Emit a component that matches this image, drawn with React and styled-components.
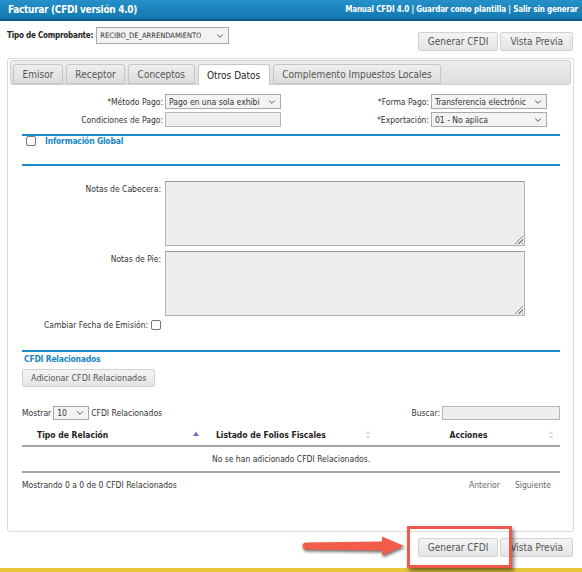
import React from "react";
import styled, {createGlobalStyle} from "styled-components";

const GlobalStyle = createGlobalStyle`
  * { box-sizing: border-box; }
  body {
    margin: 0;
    background: #fff;
    font-family: "DejaVu Sans Condensed", "Liberation Sans", sans-serif;
    color: #333;
  }
`;

const tabs = ["Emisor", "Receptor", "Conceptos", "Otros Datos", "Complemento Impuestos Locales"];

const App = () => {
    return (
        <Page>
            <GlobalStyle/>
            <Header>
                <Title>Facturar (CFDI versión 4.0)</Title>
                <Links>Manual CFDI 4.0 | Guardar como plantilla | Salir sin generar</Links>
            </Header>

            <TopRow>
                <TipoLabel>Tipo de Comprobante:</TipoLabel>
                <Select width={133} height={17} size={7.5}>
                    <span>RECIBO_DE_ARRENDAMIENTO</span>
                    <Chevron/>
                </Select>
                <Actions top={5}>
                    <Button>Generar CFDI</Button>
                    <Button>Vista Previa</Button>
                </Actions>
            </TopRow>

            <Panel>
                <TabBar>
                    {tabs.map((t) => (
                        <Tab key={t} active={t === "Otros Datos"}>{t}</Tab>
                    ))}
                </TabBar>

                <Content>
                    <FormGrid>
                        <Label>*Método Pago:</Label>
                        <Select width={116} height={15}>
                            <span>Pago en una sola exhibi</span>
                            <Chevron/>
                        </Select>
                        <Label>*Forma Pago:</Label>
                        <Select width={116} height={15}>
                            <span>Transferencia electrónic</span>
                            <Chevron/>
                        </Select>

                        <Label>Condiciones de Pago:</Label>
                        <Input/>
                        <Label>*Exportación:</Label>
                        <Select width={116} height={15}>
                            <span>01 - No aplica</span>
                            <Chevron/>
                        </Select>
                    </FormGrid>

                    <Rule top={7}/>
                    <CheckRow>
                        <Check/>
                        <SectionTitle>Información Global</SectionTitle>
                    </CheckRow>
                    <Rule top={18}/>

                    <NotesGrid>
                        <Label>Notas de Cabecera:</Label>
                        <Textarea/>
                        <Label>Notas de Pie:</Label>
                        <Textarea/>
                    </NotesGrid>

                    <FechaRow>
                        <Label>Cambiar Fecha de Emisión:</Label>
                        <Check/>
                    </FechaRow>

                    <Rule top={20}/>
                    <RelTitle>CFDI Relacionados</RelTitle>
                    <AddButton>Adicionar CFDI Relacionados</AddButton>

                    <TableTools>
                        <ToolGroup>
                            <Small>Mostrar</Small>
                            <Select width={36} height={14}>
                                <span>10</span>
                                <Chevron/>
                            </Select>
                            <Small>CFDI Relacionados</Small>
                        </ToolGroup>
                        <ToolGroup>
                            <Small>Buscar:</Small>
                            <SearchInput/>
                        </ToolGroup>
                    </TableTools>

                    <Table>
                        <HeadRow>
                            <Th pad={15}>Tipo de Relación<Sort dir="up"/></Th>
                            <Th pad={11}>Listado de Folios Fiscales<Sort/></Th>
                            <Th center>Acciones<Sort/></Th>
                        </HeadRow>
                        <EmptyRow>No se han adicionado CFDI Relacionados.</EmptyRow>
                    </Table>

                    <TableFooter>
                        <Small>Mostrando 0 a 0 de 0 CFDI Relacionados</Small>
                        <Pager>
                            <span>Anterior</span>
                            <span>Siguiente</span>
                        </Pager>
                    </TableFooter>
                </Content>
            </Panel>

            <BottomActions>
                <Button>Generar CFDI</Button>
                <Button>Vista Previa</Button>
                <Arrow viewBox="0 0 104 20" width="104" height="20">
                    <path d="M4 6.5 L80 5.5 L80 0.5 L102 10 L80 19.5 L80 14.5 L4 13.5 A3.5 3.5 0 0 1 4 6.5 Z" fill="#f35b4b"/>
                </Arrow>
                <Highlight/>
            </BottomActions>
            <Footer/>
        </Page>
    );
};

const Chevron = () => (
    <svg width="8" height="6" viewBox="0 0 8 6">
        <path d="M1.2 1.5 L4 4.3 L6.8 1.5" stroke="#555" strokeWidth="1" fill="none"/>
    </svg>
);

const Sort = ({dir}) => (
    <SortIcon viewBox="0 0 6 10" width="6" height="10">
        {dir === "up" ? (
            <path d="M0 6 L3 1.5 L6 6 Z" fill="#6f6fd0"/>
        ) : (
            <>
                <path d="M0.5 4 L3 1 L5.5 4 Z" fill="#dcdcdc"/>
                <path d="M0.5 6 L3 9 L5.5 6 Z" fill="#dcdcdc"/>
            </>
        )}
    </SortIcon>
);

const Page = styled.div`
  position: relative;
  width: 582px;
  height: 572px;
  overflow: hidden;
`;

const Header = styled.div`
  display: flex;
  align-items: center;
  justify-content: space-between;
  height: 21px;
  padding: 0 4px 0 8px;
  background: linear-gradient(#2590c9, #1378b0);
  border-bottom: 2px solid #0d5784;
`;

const Title = styled.h1`
  margin: 0;
  font-size: 10px;
  font-weight: bold;
  letter-spacing: -0.3px;
  color: #fff;
`;

const Links = styled.div`
  font-size: 8px;
  font-weight: bold;
  letter-spacing: -0.15px;
  color: #fff;
`;

const TopRow = styled.div`
  display: flex;
  align-items: flex-start;
  padding: 6px 9px 0 7px;
  height: 37px;
`;

const TipoLabel = styled.span`
  font-size: 8px;
  font-weight: bold;
  letter-spacing: -0.2px;
  color: #222;
  line-height: 17px;
  margin-right: 3px;
`;

const Select = styled.div`
  display: flex;
  align-items: center;
  justify-content: space-between;
  width: ${p => p.width}px;
  height: ${p => p.height}px;
  padding: 0 4px 0 3px;
  border: 1px solid #a9a9a9;
  background: #f3f3f3;
  font-size: ${p => p.size || 8.5}px;
  color: #333;
  white-space: nowrap;
  overflow: hidden;

  span {
    overflow: hidden;
  }

  svg {
    flex: none;
    margin-left: 2px;
  }
`;

const Actions = styled.div`
  display: flex;
  gap: 2px;
  margin-left: auto;
  margin-top: ${p => p.top || 0}px;
`;

const Button = styled.button`
  height: 19px;
  padding: 0 9px;
  border: 1px solid #d2d2d2;
  border-radius: 2px;
  background: linear-gradient(#f4f4f4, #e4e4e4);
  font-family: inherit;
  font-size: 10px;
  color: #555;
  white-space: nowrap;
`;

const AddButton = styled(Button)`
  display: block;
  height: 18px;
  margin-top: 5px;
  padding: 0 8px;
  font-size: 9px;
`;

const Panel = styled.div`
  margin: 0 8px 0 7px;
  height: 474px;
  padding: 1px 2px 2px;
  border: 1px solid #dcdcdc;
  border-radius: 3px;
`;

const TabBar = styled.div`
  display: flex;
  align-items: flex-end;
  gap: 3px;
  height: 25px;
  padding: 0 2px;
  background: linear-gradient(#ececec, #dedede);
  border: 1px solid #d0d0d0;
  border-radius: 3px;
`;

const Tab = styled.div`
  display: flex;
  align-items: center;
  height: ${p => p.active ? 21 : 20}px;
  margin-bottom: ${p => p.active ? -1 : 0}px;
  padding: 0 8.5px;
  border: 1px solid #c6c6c6;
  border-bottom: ${p => p.active ? "none" : "1px solid #c6c6c6"};
  border-radius: 3px 3px 0 0;
  background: ${p => p.active ? "#fff" : "linear-gradient(#efefef, #dcdcdc)"};
  font-size: 10px;
  color: ${p => p.active ? "#222" : "#555"};
  white-space: nowrap;
`;

const Content = styled.div`
  padding: 9px 11px 0 12px;
`;

const FormGrid = styled.div`
  display: grid;
  grid-template-columns: 141px 116px 146px 116px;
  column-gap: 2px;
  row-gap: 3px;
  align-items: center;
`;

const Label = styled.span`
  font-size: 8.5px;
  color: #333;
  text-align: right;
  white-space: nowrap;
`;

const Input = styled.div`
  width: 116px;
  height: 15px;
  border: 1px solid #b5b5b5;
  background: #eeeeee;
`;

const Rule = styled.div`
  height: 2px;
  margin-top: ${p => p.top}px;
  background: #1b8cca;
`;

const CheckRow = styled.div`
  display: flex;
  align-items: center;
  gap: 7px;
  padding: 0 0 0 4px;
`;

const Check = styled.span`
  display: inline-block;
  width: 10px;
  height: 10px;
  border: 1px solid #777;
  border-radius: 2px;
  background: #fff;
`;

const SectionTitle = styled.span`
  font-size: 8.5px;
  font-weight: bold;
  letter-spacing: -0.2px;
  color: #1a86c4;
  padding-left: 2px;
`;

const RelTitle = styled(SectionTitle)`
  display: block;
  margin-top: 2px;
`;

const NotesGrid = styled.div`
  display: grid;
  grid-template-columns: 139px 360px;
  column-gap: 4px;
  row-gap: 5px;
  margin-top: 15px;
  align-items: start;

  ${Label} {
    padding-top: 3px;
  }
`;

const Textarea = styled.div`
  position: relative;
  height: 65px;
  border: 1px solid #b0b0b0;
  border-top-color: #9a9a9a;
  background: #ededed;

  &::after {
    content: "";
    position: absolute;
    right: 1px;
    bottom: 1px;
    width: 9px;
    height: 9px;
    background: repeating-linear-gradient(135deg, transparent 0 1.5px, #888 1.5px 2.5px);
    clip-path: polygon(100% 0, 100% 100%, 0 100%);
  }
`;

const FechaRow = styled.div`
  display: flex;
  align-items: center;
  gap: 3px;
  margin: 4px 0 0 22px;
`;

const TableTools = styled.div`
  display: flex;
  justify-content: space-between;
  align-items: center;
  margin-top: 19px;
`;

const ToolGroup = styled.div`
  display: flex;
  align-items: center;
  gap: 2px;
`;

const Small = styled.span`
  font-size: 8.5px;
  color: #333;
`;

const SearchInput = styled.div`
  width: 118px;
  height: 14px;
  border: 1px solid #b5b5b5;
  background: #eeeeee;
`;

const Table = styled.div`
  margin-top: 4px;
`;

const HeadRow = styled.div`
  display: grid;
  grid-template-columns: 183px 172px 1fr;
  height: 23px;
  border-bottom: 2px solid #a4a4a4;
`;

const Th = styled.div`
  display: flex;
  align-items: center;
  justify-content: ${p => p.center ? "center" : "flex-start"};
  position: relative;
  padding-left: ${p => p.pad || 0}px;
  font-size: 8.5px;
  font-weight: bold;
  color: #222;
`;

const SortIcon = styled.svg`
  position: absolute;
  right: 6px;
  top: 6px;
`;

const EmptyRow = styled.div`
  display: flex;
  align-items: center;
  justify-content: center;
  height: 26px;
  border-bottom: 2px solid #a4a4a4;
  font-size: 8.5px;
  color: #333;
`;

const TableFooter = styled.div`
  display: flex;
  justify-content: space-between;
  align-items: center;
  margin-top: 7px;
`;

const Pager = styled.div`
  display: flex;
  gap: 15px;
  padding-right: 9px;
  font-size: 8.5px;
  color: #666;
`;

const BottomActions = styled.div`
  position: relative;
  display: flex;
  justify-content: flex-end;
  gap: 2px;
  padding: 6px 9px 0 0;
  height: 36px;
`;

const Arrow = styled.svg`
  position: absolute;
  left: 302px;
  top: 4px;
  filter: drop-shadow(1px 2px 1.5px rgba(0, 0, 0, 0.55));
`;

const Highlight = styled.div`
  position: absolute;
  left: 407px;
  top: -6px;
  width: 105px;
  height: 42px;
  border: 3px solid #f05a4d;
  box-shadow: 2px 3px 4px rgba(0, 0, 0, 0.5);
`;

const Footer = styled.div`
  height: 4px;
  background: #e8c63c;
`;

export default App;
